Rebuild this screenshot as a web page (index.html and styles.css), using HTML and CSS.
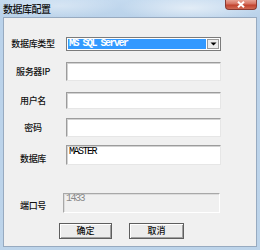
FILE: index.html
```html
<!DOCTYPE html>
<html lang="zh">
<head>
<meta charset="utf-8">
<title>数据库配置</title>
<link rel="stylesheet" href="styles.css">
</head>
<body>
<div class="window">
  <div class="titlebar">
    <span class="title">数据库配置</span>
    <span class="close">
      <svg width="10" height="7" viewBox="0 0 10 7"><path d="M2 0.8 L8 6.2 M8 0.8 L2 6.2" stroke="#fff" stroke-width="2" fill="none"/></svg>
    </span>
  </div>
  <div class="client">
    <div class="row row-type">
      <span class="label">数据库类型</span>
      <div class="combo">
        <span class="combo-value">MS SQL Server</span>
        <span class="combo-btn"><svg width="7" height="4" viewBox="0 0 7 4"><path d="M0.5 0.5 H6.5 L3.5 3.5 Z" fill="#000"/></svg></span>
      </div>
    </div>
    <div class="row row-ip">
      <span class="label">服务器IP</span>
      <input class="field field-ip" type="text">
    </div>
    <div class="row row-user">
      <span class="label">用户名</span>
      <input class="field field-user" type="text">
    </div>
    <div class="row row-pwd">
      <span class="label">密码</span>
      <input class="field field-pwd" type="password">
    </div>
    <div class="row row-db">
      <span class="label label-db">数据库</span>
      <textarea class="field field-db">MASTER</textarea>
    </div>
    <div class="row row-port">
      <span class="label label-port">端口号</span>
      <input class="field field-port" type="text" value="1433" disabled>
    </div>
    <div class="buttons">
      <button class="btn btn-ok">确定</button>
      <button class="btn btn-cancel">取消</button>
    </div>
  </div>
</div>
</body>
</html>
```
FILE: styles.css
```css
html, body {
  margin: 0;
  padding: 0;
  background: #ffffff;
}

.window {
  width: 260px;
  height: 250px;
  box-sizing: border-box;
  padding: 0 3px 3px 3px;
  display: flex;
  flex-direction: column;
  background:
    radial-gradient(ellipse 70px 14px at 190px 8px, rgba(255,255,255,0.55), rgba(255,255,255,0) 100%),
    radial-gradient(ellipse 60px 12px at 60px 6px, rgba(255,255,255,0.35), rgba(255,255,255,0) 100%),
    linear-gradient(180deg, #c4daef 0px, #bad2ea 17px, #bdd4ea 100%);
  font-family: "Noto Sans CJK SC", "Noto Sans", sans-serif;
}

.titlebar {
  height: 17px;
  flex: none;
  display: flex;
  align-items: flex-start;
  justify-content: space-between;
}

.title {
  font-size: 10px;
  line-height: 11px;
  padding-top: 3px;
  color: #111111;
  font-weight: 500;
  letter-spacing: -0.5px;
}

.close {
  width: 32px;
  height: 10px;
  box-sizing: border-box;
  border: 1px solid #8a3a32;
  border-top: none;
  border-radius: 0 0 4px 4px;
  background: linear-gradient(180deg, #e8a394 0%, #d5705f 45%, #c1422e 55%, #cf6a54 100%);
  display: flex;
  align-items: center;
  justify-content: center;
}

.close svg {
  display: block;
}

.client {
  flex: 1;
  box-sizing: border-box;
  border: 1px solid #97aac0;
  background: #f0f0f0;
  padding-top: 19px;
  display: flex;
  flex-direction: column;
}

.row {
  display: flex;
  align-items: center;
}

.label {
  width: 58px;
  margin-right: 4px;
  text-align: center;
  font-size: 9px;
  line-height: 10px;
  color: #111111;
  font-weight: 500;
  white-space: nowrap;
  letter-spacing: -0.3px;
}

.row-ip { margin-top: 11px; }
.row-user { margin-top: 11px; }
.row-pwd { margin-top: 9px; }
.row-db { margin-top: 8px; align-items: flex-start; }
.row-port { margin-top: 28px; align-items: flex-start; }

.label-db { margin-top: 9px; }
.label-port { margin-top: 8px; }

.combo {
  width: 155px;
  height: 14px;
  box-sizing: border-box;
  border: 1px solid #7b7b7b;
  background: #ffffff;
  padding: 1px;
  display: flex;
  align-items: stretch;
}

.combo-value {
  flex: 1;
  background: #3399ff;
  color: #ffffff;
  font-family: "Liberation Mono", monospace;
  font-weight: bold;
  font-size: 10px;
  letter-spacing: -1.5px;
  line-height: 10px;
  padding-left: 1px;
  margin-right: 1px;
  overflow: hidden;
  white-space: nowrap;
}

.combo-btn {
  width: 12px;
  box-sizing: border-box;
  border: 1px solid #9a9a9a;
  background: #ececec;
  display: flex;
  align-items: center;
  justify-content: center;
}

.combo-btn svg {
  display: block;
}

.field {
  box-sizing: border-box;
  width: 155px;
  margin: 0;
  padding: 0 2px;
  border: 1px solid;
  border-color: #9c9c9c #e6e6e6 #e6e6e6 #9c9c9c;
  box-shadow: inset 1px 1px 0 #d2d2d2;
  background: #ffffff;
  font-family: "Liberation Mono", monospace;
  font-size: 10px;
  letter-spacing: -1.5px;
  color: #000000;
  outline: none;
}

.field-ip { height: 19px; }
.field-user { height: 17px; }
.field-pwd { height: 19px; }

.field-db {
  height: 20px;
  resize: none;
  overflow: hidden;
  line-height: 9px;
  padding-top: 1px;
}

.field-port {
  width: 157px;
  height: 20px;
  margin-left: -3px;
  background: #f0f0f0;
  color: #8a8a8a;
  border-color: #a8a8a8 #ffffff #ffffff #a8a8a8;
  box-shadow: inset 1px 1px 0 #dcdcdc;
  line-height: 9px;
  padding-top: 0;
  padding-bottom: 9px;
}

.buttons {
  display: flex;
  gap: 17px;
  padding-left: 55px;
  margin-top: 10px;
}

.btn {
  width: 53px;
  height: 16px;
  box-sizing: border-box;
  margin: 0;
  padding: 0;
  border: 1px solid #5e5e5e;
  box-shadow: inset 1px 1px 0 #ffffff, inset -1px -1px 0 #a0a0a0;
  background: #ececec;
  font-family: "Noto Sans CJK SC", "Noto Sans", sans-serif;
  font-size: 9px;
  line-height: 10px;
  font-weight: 500;
  color: #111111;
}

.btn-cancel {
  width: 55px;
}
```
